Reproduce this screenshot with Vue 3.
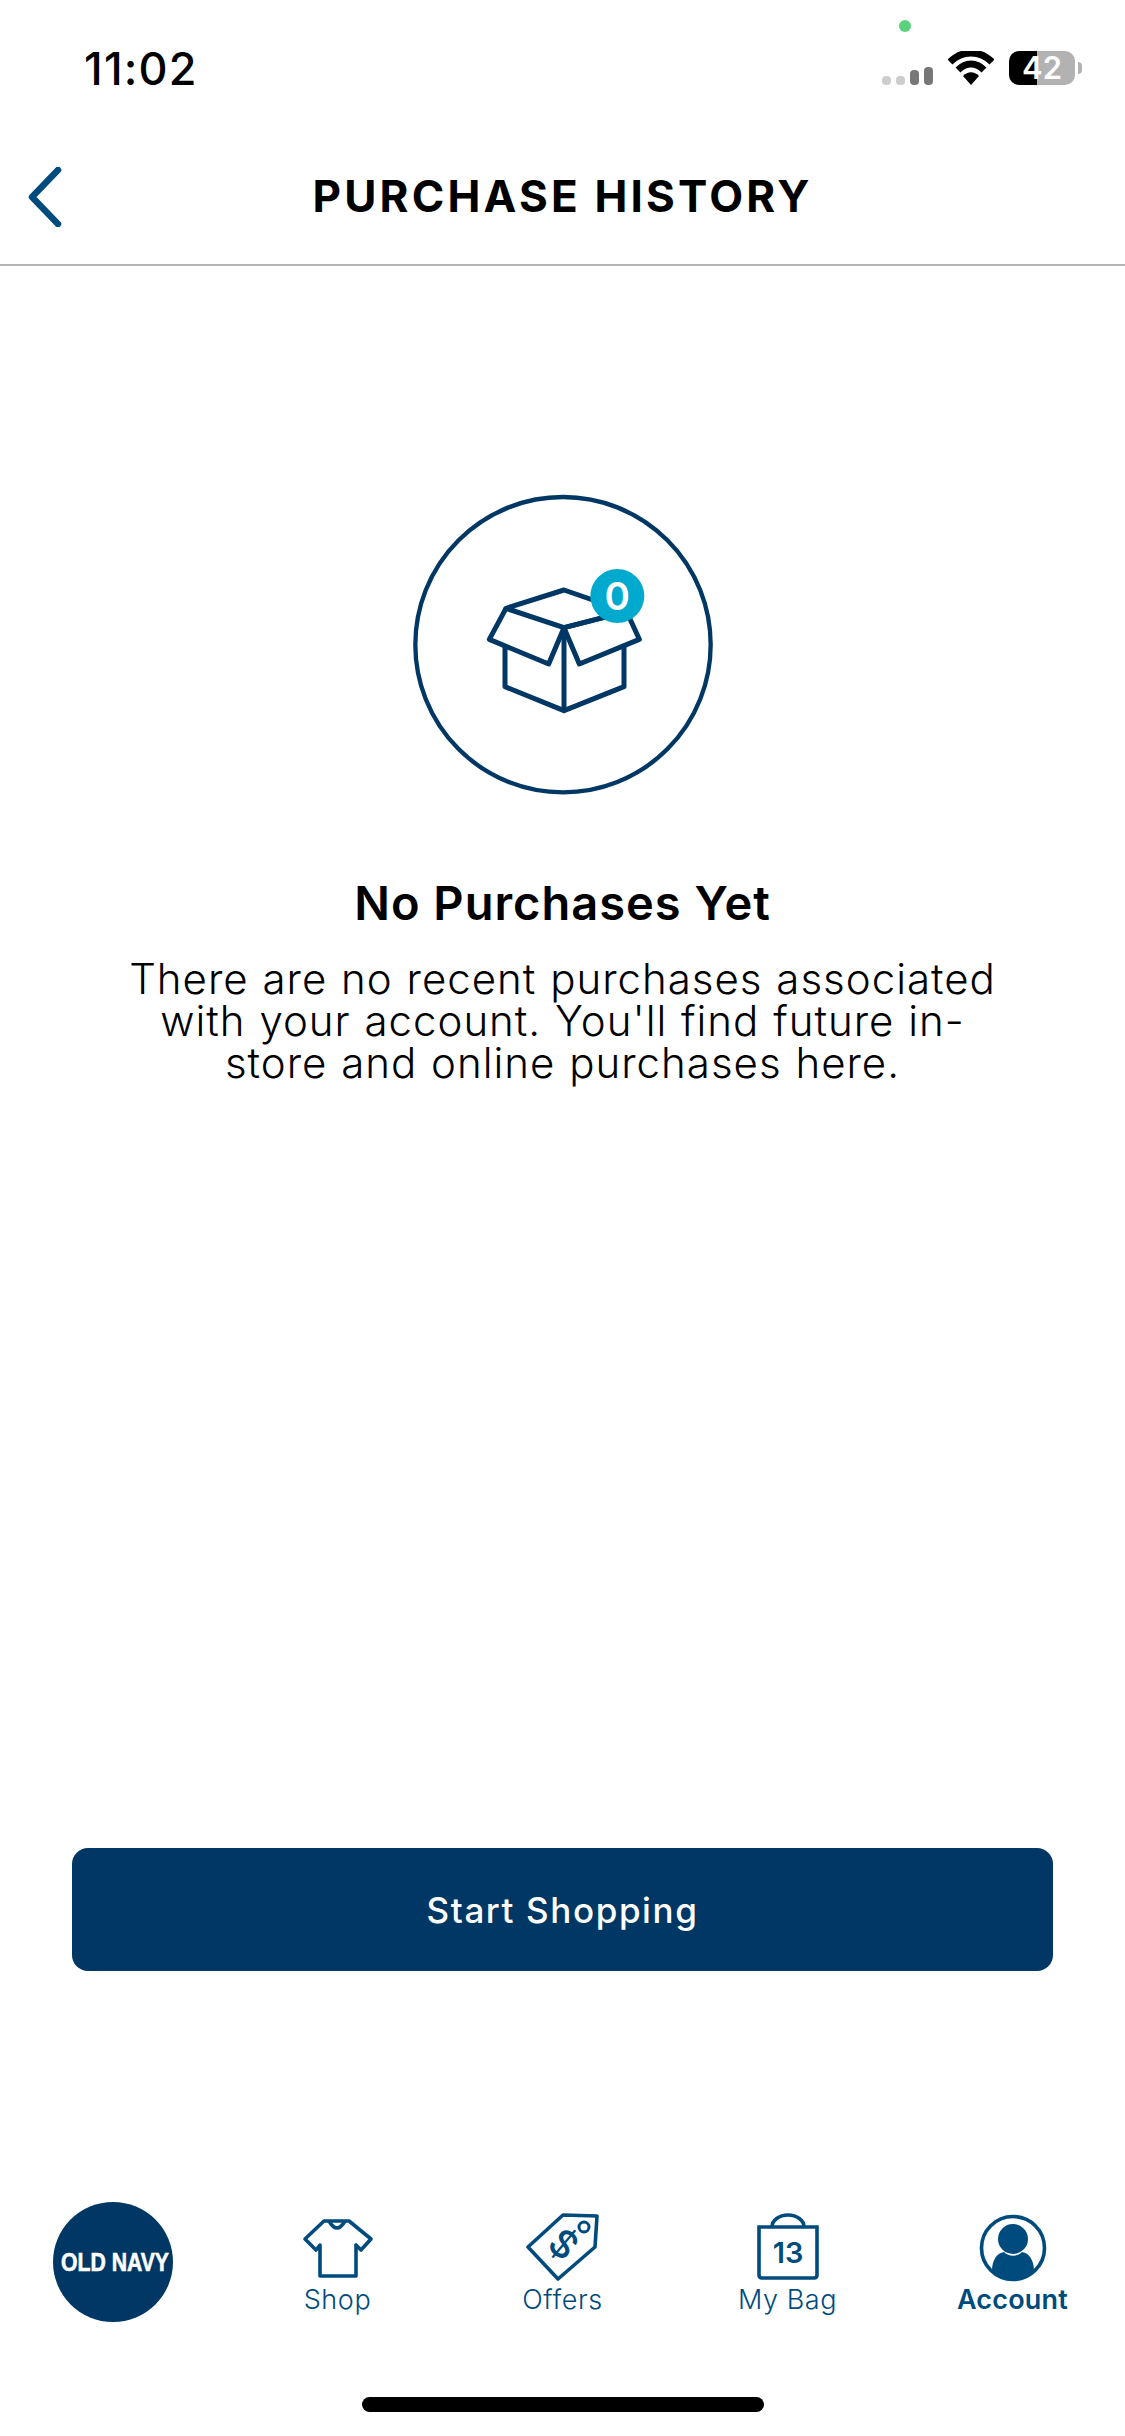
<script setup>
const navy = '#003764'
</script>

<template>
  <div class="page">
    <div class="status">
      <span class="time">11:02</span>
      <i class="cam-dot"></i>
      <div class="status-right">
        <div class="signal">
          <i class="off"></i><i class="off"></i><i class="on mid"></i><i class="on tall"></i>
        </div>
        <svg class="wifi" width="46" height="34" viewBox="0 0 46 34">
          <path d="M2 11 C14 -1 32 -1 44 11" fill="none" stroke="#000" stroke-width="7" />
          <path d="M10 19 C18 11 28 11 36 19" fill="none" stroke="#000" stroke-width="7" />
          <path d="M15 25 C20 20 26 20 31 25 L23 34 Z" fill="#000" />
        </svg>
        <div class="battery"><span>42</span></div>
        <i class="nub"></i>
      </div>
    </div>

    <header class="top">
      <svg class="back" width="36" height="60" viewBox="0 0 36 60">
        <path d="M31 3 L5 30 L31 57" fill="none" stroke="#004b7d" stroke-width="6.500" stroke-linecap="round" stroke-linejoin="round" />
      </svg>
      <h1>PURCHASE HISTORY</h1>
    </header>

    <main class="empty">
      <svg class="box" width="320" height="320" viewBox="0 0 960 960">
        <circle cx="489" cy="494" r="443" fill="none" :stroke="navy" stroke-width="13" />
        <g fill="none" :stroke="navy" stroke-width="15" stroke-linejoin="round">
          <path d="M318 385 L492 330 L680 395 L492 443 Z" />
          <path d="M318 385 L268 478 L446 552 L492 443" />
          <path d="M492 443 L680 395 L718 478 L538 552 Z" />
          <path d="M315 500 V620 L492 692 L672 620 V500" />
          <path d="M492 443 V692" />
        </g>
        <circle cx="652" cy="348" r="81" fill="#00a9ce" />
        <text x="652" y="390" class="zero">0</text>
      </svg>
      <h2>No Purchases Yet</h2>
      <p>There are no recent purchases associated<br />with your account. You'll find future in-<br />store and online purchases here.</p>
    </main>

    <button class="shop-btn">Start Shopping</button>

    <nav class="tabs">
      <div class="tab">
        <svg class="logo" width="120" height="120" viewBox="0 0 120 120">
          <circle cx="60" cy="60" r="60" :fill="navy" />
          <text x="62" y="69" class="logo-text" textLength="108" lengthAdjust="spacingAndGlyphs">OLD NAVY</text>
        </svg>
      </div>
      <div class="tab">
        <svg width="72" height="60" viewBox="0 0 72 60" class="ic shirt">
          <path d="M22 2 H47 L69 20 L59 31 L54 26 V57 H18 V26 L14 31 L3 20 Z" fill="none" stroke="#004b7d" stroke-width="3.600" stroke-linejoin="round" />
          <path d="M27 2 Q35 16 43 2" fill="none" stroke="#004b7d" stroke-width="3.600" />
        </svg>
        <span>Shop</span>
      </div>
      <div class="tab">
        <svg width="74" height="72" viewBox="0 0 74 72" class="ic">
          <path d="M37 6 L71 7 L69 38 L32 70 L2 38 Z" fill="none" stroke="#004b7d" stroke-width="3.600" stroke-linejoin="round" />
          <circle cx="58" cy="18" r="5" fill="none" stroke="#004b7d" stroke-width="3" />
          <text x="36" y="48" class="dollar" transform="rotate(40 36 37)">$</text>
        </svg>
        <span>Offers</span>
      </div>
      <div class="tab">
        <svg width="64" height="72" viewBox="0 0 64 72" class="ic">
          <path d="M16 18 A16 12 0 0 1 48 18" fill="none" stroke="#004b7d" stroke-width="3.600" />
          <path d="M3 18 H61 V66 Q61 69 58 69 H6 Q3 69 3 66 Z" fill="none" stroke="#004b7d" stroke-width="3.600" />
          <text x="32" y="54" class="bag-count">13</text>
        </svg>
        <span>My Bag</span>
      </div>
      <div class="tab active">
        <svg width="68" height="70" viewBox="0 0 68 70" class="ic avatar">
          <circle cx="34" cy="35" r="31.500" fill="none" stroke="#004b7d" stroke-width="3.600" />
          <circle cx="34" cy="26" r="15" fill="#004b7d" />
          <path d="M13 58 C13 47 18 40 25 39 C30 44 38 44 43 39 C50 40 55 47 55 58 C44 69 24 69 13 58 Z" fill="#004b7d" />
        </svg>
        <span>Account</span>
      </div>
    </nav>

    <div class="home-bar"></div>
  </div>
</template>

<style scoped>
.page {
  width: 1125px;
  height: 2436px;
  background: #fff;
  display: flex;
  flex-direction: column;
  font-family: Inter, "Liberation Sans", sans-serif;
  color: #000;
  overflow: hidden;
}

.status {
  height: 120px;
  position: relative;
  display: flex;
  justify-content: space-between;
  align-items: flex-start;
  padding: 0 43px 0 84px;
  box-sizing: border-box;
}
.time {
  font-size: 45px;
  font-weight: 500;
  line-height: 46px;
  letter-spacing: 1.2px;
  margin-top: 46px;
}
.cam-dot {
  position: absolute;
  left: 899px;
  top: 20px;
  width: 12px;
  height: 12px;
  border-radius: 50%;
  background: #5bd17c;
}
.status-right {
  display: flex;
  align-items: flex-end;
  height: 34px;
  margin-top: 51px;
}
.signal {
  display: flex;
  align-items: flex-end;
  gap: 5px;
  margin-right: 15px;
}
.signal i {
  width: 9px;
  height: 9px;
  border-radius: 4px;
}
.signal .off { background: #cdcdcd; }
.signal .on { background: #777; }
.signal .mid { height: 15px; }
.signal .tall { height: 18px; }
.wifi { margin-right: 15px; }
.battery {
  width: 66px;
  height: 34px;
  border-radius: 10px;
  background: linear-gradient(90deg, #000 42%, #b2b2b2 42%);
  color: #fff;
  display: flex;
  align-items: center;
  justify-content: center;
}
.battery span {
  font-size: 31px;
  font-weight: 600;
  line-height: 34px;
}
.nub {
  width: 4px;
  height: 12px;
  background: #b2b2b2;
  border-radius: 0 4px 4px 0;
  margin: 0 0 11px 3px;
}

.top {
  height: 146px;
  position: relative;
  display: flex;
  align-items: center;
  justify-content: center;
  border-bottom: 2px solid #b4b4b4;
  padding-top: 7px;
  box-sizing: border-box;
}
.back {
  position: absolute;
  left: 27px;
  top: 47px;
}
h1 {
  margin: 0;
  font-size: 44px;
  font-weight: 700;
  letter-spacing: 3.2px;
  line-height: 50px;
}

.empty {
  flex: 1;
  display: flex;
  flex-direction: column;
  align-items: center;
  text-align: center;
  padding-top: 214px;
}
.box {
  display: block;
  margin-right: 5px;
}
.zero {
  fill: #fff;
  font-size: 116px;
  font-weight: 600;
  text-anchor: middle;
}
h2 {
  margin: 75px 0 0;
  font-size: 47px;
  font-weight: 600;
  letter-spacing: 1px;
  line-height: 56px;
}
.empty p {
  margin: 27px 0 0;
  font-size: 42px;
  font-weight: 300;
  letter-spacing: 1px;
  word-spacing: 1px;
  line-height: 42px;
}

.shop-btn {
  align-self: center;
  width: 981px;
  height: 123px;
  background: #003764;
  color: #fff;
  border: none;
  border-radius: 16px;
  font-family: inherit;
  font-size: 35px;
  font-weight: 500;
  letter-spacing: 1.6px;
  margin-bottom: 223px;
}

.tabs {
  display: grid;
  grid-template-columns: repeat(5, 225px);
  height: 130px;
  color: #004b7d;
}
.tab {
  display: flex;
  flex-direction: column;
  align-items: center;
  justify-content: flex-end;
  height: 130px;
}
.tab span {
  font-size: 27px;
  font-weight: 300;
  letter-spacing: 0.6px;
  line-height: 36px;
  margin: 1px 0 6px;
}
.tab.active span { font-weight: 600; letter-spacing: 0.2px; }
.ic { display: block; }
.shirt { margin-bottom: 2px; }
.avatar { margin-bottom: -2px; }
.logo { display: block; margin-bottom: 2px; }
.logo-text {
  fill: #fff;
  stroke: #fff;
  stroke-width: 0.6px;
  font-family: "Liberation Sans", sans-serif;
  font-size: 26px;
  font-weight: 700;
  text-anchor: middle;
}
.dollar {
  fill: #004b7d;
  font-size: 38px;
  font-weight: 500;
  text-anchor: middle;
}
.bag-count {
  fill: #004b7d;
  font-size: 29px;
  font-weight: 600;
  text-anchor: middle;
}

.home-bar {
  width: 402px;
  height: 15px;
  border-radius: 8px;
  background: #000;
  align-self: center;
  margin: 73px 0 24px;
}
</style>

<style>
body {
  background: #fff;
}
</style>
